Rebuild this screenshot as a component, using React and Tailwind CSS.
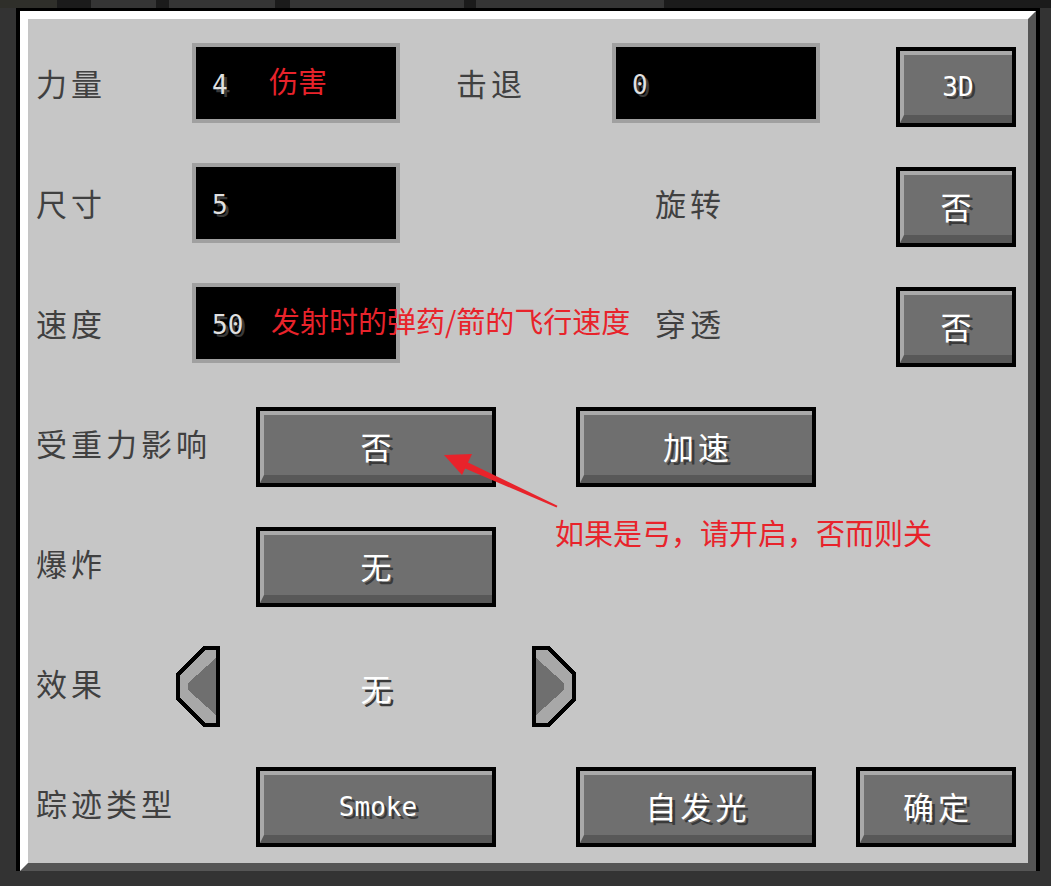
const cjk = "font-['Noto_Sans_CJK_SC','Noto_Sans',sans-serif]"
const mono = "font-['DejaVu_Sans_Mono','Liberation_Mono',monospace]"
const shadow = '[text-shadow:3px_3px_0_#3a3a3a]'

function Label({ className = '', children }) {
  return (
    <div className={`self-center pb-[6px] ${cjk} text-[31px] leading-none tracking-[4px] text-[#404040] ${className}`}>
      {children}
    </div>
  )
}

function Field({ value, note, noteLeft = 'left-[73px]' }) {
  return (
    <div className="relative self-start w-[208px] h-[80px] border-4 border-[#a0a0a0] bg-black flex items-center pl-[16px] pt-[4px]">
      <span className={`${mono} text-[26px] leading-none text-[#e0e0e0] ${shadow}`}>{value}</span>
      {note && (
        <span className={`absolute ${noteLeft} top-[33px] -translate-y-1/2 whitespace-nowrap ${cjk} text-[29px] leading-none text-[#e8232b]`}>
          {note}
        </span>
      )}
    </div>
  )
}

function McButton({ w = 'w-[240px]', ascii = false, children }) {
  return (
    <div className={`self-end ${w} h-[80px] border-4 border-black`}>
      <div className="h-full border-t-4 border-l-4 border-b-8 border-r-0 border-t-[#a9a9a9] border-l-[#a9a9a9] border-b-[#585858] bg-[#6f6f6f] flex items-center justify-center">
        <span
          className={`${ascii ? `${mono} text-[26px] pt-[3px]` : `${cjk} text-[31px] tracking-[4px]`} leading-none text-white ${shadow}`}
        >
          {children}
        </span>
      </div>
    </div>
  )
}

function ArrowBtn({ dir }) {
  const left = dir === 'left'
  const f = (pts) =>
    pts
      .map(([x, y]) => `${left ? x : 44 - x},${y}`)
      .join(' ')
  return (
    <svg width="44" height="81" viewBox="0 0 44 81" shapeRendering="crispEdges" className="self-end">
      <polygon points={f([[27, 0], [44, 0], [44, 81], [27, 81], [0, 54], [0, 27]])} fill="#000" />
      <polygon points={f([[29, 4], [40, 4], [40, 77], [29, 77], [4, 52], [4, 29]])} fill="#a8a8a8" />
      <polygon points={f([[40, 12], [40, 69], [12, 44], [12, 37]])} fill="#6f6f6f" />
    </svg>
  )
}

export default function App() {
  return (
    <div className="relative w-[1051px] h-[886px] bg-[#333333] overflow-hidden">
      {/* tabs peeking above the panel */}
      <div className="h-[8px] flex bg-[#1b1b1b]">
        <div className="w-[57px] bg-[#2f2f2a]" />
        <div className="w-[34px]" />
        <div className="w-[65px] bg-[#353535]" />
        <div className="w-[13px]" />
        <div className="w-[106px] bg-[#353535]" />
        <div className="w-[15px]" />
        <div className="w-[174px] bg-[#353535]" />
        <div className="w-[12px]" />
        <div className="w-[188px] bg-[#353535]" />
      </div>

      {/* panel */}
      <div className="ml-[16px] w-[1024px] h-[863px] border-t-[3px] border-x-4 border-black">
        <div className="h-full border-8 border-t-white border-l-white border-r-[#555555] border-b-[#555555] bg-[#c6c6c6] pt-[24px] pl-[8px]">
          <div className="flex flex-col gap-[36px]">
            <div className="h-[84px] flex">
              <Label className="w-[156px]">力量</Label>
              <Field value="4" note="伤害" />
              <Label className="w-[212px] pl-[56px]">击退</Label>
              <Field value="0" />
              <div className="w-[76px]" />
              <McButton w="w-[120px]" ascii>3D</McButton>
            </div>

            <div className="h-[84px] flex">
              <Label className="w-[156px]">尺寸</Label>
              <Field value="5" />
              <Label className="w-[496px] pl-[255px]">旋转</Label>
              <McButton w="w-[120px]">否</McButton>
            </div>

            <div className="h-[84px] flex">
              <Label className="w-[156px]">速度</Label>
              <Field value="50" note="发射时的弹药/箭的飞行速度" noteLeft="left-[75px]" />
              <Label className="w-[496px] pl-[255px]">穿透</Label>
              <McButton w="w-[120px]">否</McButton>
            </div>

            <div className="h-[84px] flex">
              <Label className="w-[220px]">受重力影响</Label>
              <McButton>否</McButton>
              <div className="w-[80px]" />
              <McButton>加速</McButton>
            </div>

            <div className="h-[84px] flex">
              <Label className="w-[220px]">爆炸</Label>
              <McButton>无</McButton>
            </div>

            <div className="h-[84px] flex">
              <Label className="w-[140px]">效果</Label>
              <ArrowBtn dir="left" />
              <div className="self-end w-[312px] h-[80px] flex items-center justify-center">
                <span className={`${cjk} text-[31px] leading-none text-white ${shadow}`}>无</span>
              </div>
              <ArrowBtn dir="right" />
            </div>

            <div className="h-[84px] flex">
              <Label className="w-[220px]">踪迹类型</Label>
              <McButton ascii>Smoke</McButton>
              <div className="w-[80px]" />
              <McButton>自发光</McButton>
              <div className="w-[40px]" />
              <McButton w="w-[160px]">确定</McButton>
            </div>
          </div>
        </div>
      </div>

      {/* red annotation */}
      <svg className="absolute left-0 top-0 pointer-events-none" width="1051" height="886">
        <polygon points="444,455 472,454 462,475" fill="#e8232b" />
        <polygon points="464,468 467,462 557.4,505.8 556.6,507.6" fill="#e8232b" />
      </svg>
      <div className={`absolute left-[555px] top-[518px] whitespace-nowrap ${cjk} text-[29px] leading-none text-[#e8232b]`}>
        如果是弓，请开启，否而则关
      </div>
    </div>
  )
}
